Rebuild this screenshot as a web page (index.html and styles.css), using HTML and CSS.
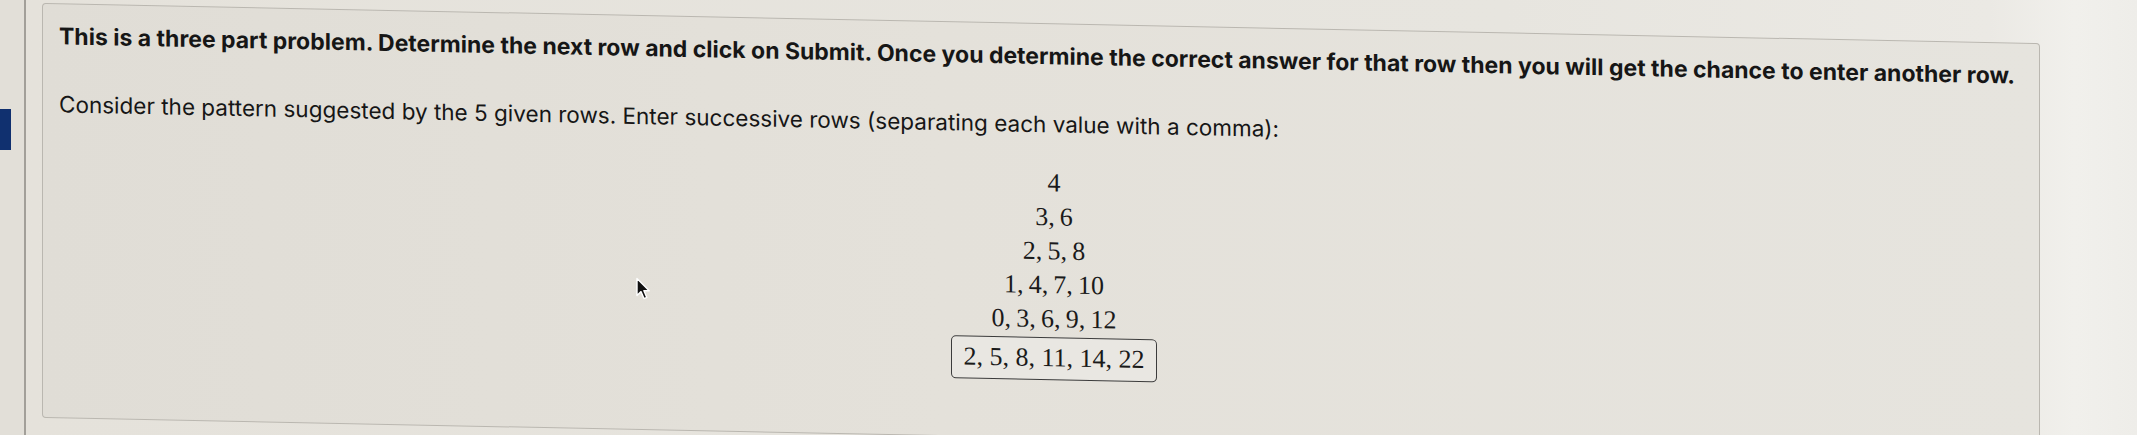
FILE: index.html
```html
<!DOCTYPE html>
<html lang="en">
<head>
<meta charset="utf-8">
<title>Pattern problem</title>
<link rel="stylesheet" href="styles.css">
</head>
<body>
<div class="page">
  <aside class="rail"><div class="rail-mark"></div></aside>
  <main class="content">
    <section class="card">
      <p class="intro">This is a three part problem. Determine the next row and click on Submit. Once you determine the correct answer for that row then you will get the chance to enter another row.</p>
      <p class="prompt">Consider the pattern suggested by the 5 given rows. Enter successive rows (separating each value with a comma):</p>
      <div class="pattern">
        <div class="row">4</div>
        <div class="row">3,&#8201;6</div>
        <div class="row">2,&#8201;5,&#8201;8</div>
        <div class="row">1,&#8201;4,&#8201;7,&#8201;10</div>
        <div class="row">0,&#8201;3,&#8201;6,&#8201;9,&#8201;12</div>
        <div class="answer">2, 5, 8, 11, 14, 22</div>
      </div>
      <svg class="cursor" width="16" height="24" viewBox="0 0 16 24" aria-hidden="true">
        <path d="M2 1.5 L2 18.5 L6 14.6 L9 21.5 L11.8 20.3 L8.9 13.6 L14.2 13.6 Z" fill="#111" stroke="#fff" stroke-width="1.4" stroke-linejoin="round"/>
      </svg>
    </section>
  </main>
</div>
</body>
</html>
```

FILE: styles.css
```css
html, body {
  margin: 0;
  padding: 0;
}

body {
  width: 2137px;
  height: 435px;
  overflow: hidden;
  background: #e6e3dd;
  font-family: Inter, "Liberation Sans", sans-serif;
  color: #161616;
}

.page {
  display: flex;
  height: 435px;
}

.rail {
  flex: 0 0 26px;
  box-sizing: border-box;
  padding-top: 109px;
  border-right: 2px solid #a29f99;
  background: #e2dfd8;
}

.rail-mark {
  width: 11px;
  height: 41px;
  background: #10306f;
}

.content {
  flex: 1;
  padding: 3px 0 0 16px;
  background: linear-gradient(to right, #e5e2db 0%, #e7e5df 70%, #ebe9e4 93%, #f1f0ec 97%, #eeede9 100%);
  overflow: hidden;
}

.card {
  position: relative;
  box-sizing: border-box;
  width: 1998px;
  height: 415px;
  padding: 17px 20px 0 16px;
  border: 1.5px solid #bab7b0;
  border-radius: 4px;
  background: linear-gradient(to right, #e0ddd6 0%, #e4e1da 45%, #e6e4de 100%);
  transform-origin: 0 0;
  transform: skewY(1.15deg);
}

.intro {
  margin: 0;
  font-size: 23px;
  line-height: 30px;
  font-weight: 700;
  white-space: nowrap;
}

.prompt {
  margin: 38px 0 0;
  font-size: 22.5px;
  line-height: 30px;
  font-weight: 400;
  white-space: nowrap;
}

.pattern {
  display: flex;
  flex-direction: column;
  align-items: center;
  margin: 27px 0 0 30px;
  font-family: "Liberation Serif", "Times New Roman", serif;
  font-size: 26px;
  color: #1a1a1a;
}

.row {
  line-height: 34px;
  height: 34px;
}

.answer {
  box-sizing: border-box;
  height: 43px;
  margin-top: 1px;
  padding: 0 11px;
  border: 1.5px solid #3c3c3c;
  border-radius: 5px;
  background: #e9e7e2;
  font-size: 26px;
  line-height: 40px;
  white-space: nowrap;
}

.cursor {
  position: absolute;
  left: 592px;
  top: 261px;
}
```
